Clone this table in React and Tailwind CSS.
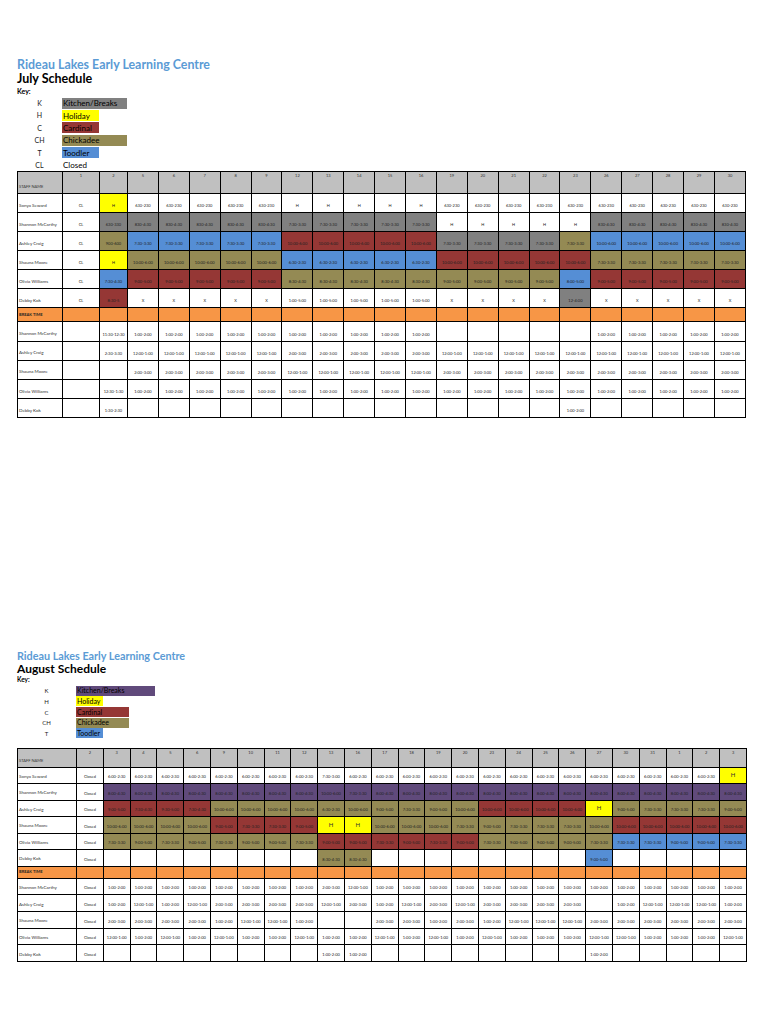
import React from 'react';

const fills = {
  '': 'bg-white',
  y: 'bg-[#ffff00]',
  g: 'bg-[#808080]',
  r: 'bg-[#953735]',
  o: 'bg-[#948a54]',
  b: 'bg-[#558ed5]',
  p: 'bg-[#604a7b]',
};

const rep = (n, c, t) => Array.from({ length: n }, () => [c, t]);
const txt = (n, t = '') => Array.from({ length: n }, () => t);

// July
const julyDays = ['1', '2', '5', '6', '7', '8', '9', '12', '13', '14', '15', '16', '19', '20', '21', '22', '23', '26', '27', '28', '29', '30'];

const julyRows = [
  ['Sonya Seward', [['', 'CL'], ['y', 'H'], ...rep(5, '', '630-230'), ...rep(5, '', 'H'), ...rep(10, '', '630-230')]],
  ['Shannon McCarthy', [['', 'CL'], ['g', '630-330'], ...rep(5, 'g', '830-4:30'), ...rep(5, 'g', '7:30-3:30'), ...rep(5, '', 'H'), ...rep(5, 'g', '830-4:30')]],
  ['Ashley Craig', [['', 'CL'], ['o', '900-600'], ...rep(5, 'b', '7:30-3:30'), ...rep(5, 'r', '10:00-6:00'), ...rep(4, 'g', '7:30-3:30'), ['o', '7:30-3:30'], ...rep(5, 'b', '10:00-6:00')]],
  ['Shauna Moore', [['', 'CL'], ['y', 'H'], ...rep(5, 'o', '10:00-6:00'), ...rep(5, 'b', '6:30-2:30'), ...rep(5, 'r', '10:00-6:00'), ...rep(5, 'o', '7:30-3:30')]],
  ['Olivia Williams', [['', 'CL'], ['b', '7:30-4:30'], ...rep(5, 'r', '9:00-5:00'), ...rep(5, 'o', '8:30-4:30'), ...rep(4, 'o', '9:00-5:00'), ['b', '8:00-5:00'], ...rep(5, 'r', '9:00-5:00')]],
  ['Debby Kok', [['', 'CL'], ['r', '8:30-5'], ...rep(5, '', 'X'), ...rep(5, '', '1:00-5:00'), ...rep(4, '', 'X'), ['g', '12-4:00'], ...rep(5, '', 'X')]],
];

const julyBreaks = [
  ['Shannon McCarthy', ['', '11:30-12:30', ...txt(10, '1:00-2:00'), ...txt(5), ...txt(5, '1:00-2:00')]],
  ['Ashley Craig', ['', '2:30-3:30', ...txt(5, '12:00-1:00'), ...txt(5, '2:00-3:00'), ...txt(10, '12:00-1:00')]],
  ['Shauna Moore', ['', '', ...txt(5, '2:00-3:00'), ...txt(5, '12:00-1:00'), ...txt(10, '2:00-3:00')]],
  ['Olivia Williams', ['', '12:30-1:30', ...txt(20, '1:00-2:00')]],
  ['Debby Kok', ['', '1:30-2:30', ...txt(14), '1:00-2:00', ...txt(5)]],
];

// August
const augDays = ['2', '3', '4', '5', '6', '9', '10', '11', '12', '13', '16', '17', '18', '19', '20', '23', '24', '25', '26', '27', '30', '31', '1', '2', '3'];

const augRows = [
  ['Sonya Seward', [['', 'Closed'], ...rep(8, '', '6:00-2:30'), ['', '7:30-3:00'], ...rep(14, '', '6:00-2:30'), ['y', 'H']]],
  ['Shannon McCarthy', [['', 'Closed'], ...rep(8, 'p', '8:00-4:30'), ['p', '10:00-6:00'], ['p', '7:30-3:30'], ...rep(14, 'p', '8:00-4:30')]],
  ['Ashley Craig', [['', 'Closed'], ['r', '9:00-5:00'], ['r', '7:30-4:30'], ['r', '9:30-5:00'], ['r', '7:30-4:30'], ...rep(4, 'o', '10:00-6:00'), ['o', '6:30-2:30'], ['o', '10:00-6:00'], ['o', '9:00-5:00'], ['o', '7:30-3:30'], ['o', '9:00-5:00'], ['o', '10:00-6:00'], ...rep(4, 'r', '10:00-6:00'), ['y', 'H'], ['o', '9:00-5:00'], ['o', '7:30-3:30'], ['o', '7:30-3:30'], ['o', '7:30-3:30'], ['o', '9:00-5:00']]],
  ['Shauna Moore', [['', 'Closed'], ...rep(4, 'o', '10:00-6:00'), ['r', '9:00-5:00'], ['r', '7:30-3:30'], ['r', '7:30-3:30'], ['r', '9:00-5:00'], ['y', 'H'], ['y', 'H'], ['o', '10:00-6:00'], ['o', '10:00-6:00'], ['o', '10:00-6:00'], ['o', '7:30-3:30'], ['o', '9:00-5:00'], ['o', '7:30-3:30'], ['o', '7:30-3:30'], ['o', '7:30-3:30'], ['o', '10:00-6:00'], ...rep(5, 'r', '10:00-6:00')]],
  ['Olivia Williams', [['', 'Closed'], ['o', '7:30-3:30'], ['o', '9:00-5:00'], ['o', '7:30-3:30'], ['o', '9:00-5:00'], ['o', '7:30-3:30'], ['o', '9:00-5:00'], ['o', '9:00-5:00'], ['o', '7:30-3:30'], ['r', '9:00-5:00'], ['r', '9:00-5:00'], ['r', '7:30-3:30'], ['r', '9:00-5:00'], ['r', '7:30-3:30'], ['r', '9:00-5:00'], ['o', '7:30-3:30'], ['o', '9:00-5:00'], ['o', '9:00-5:00'], ['o', '9:00-5:00'], ['o', '7:30-3:30'], ['b', '7:30-3:30'], ['b', '7:30-3:30'], ['b', '9:00-5:00'], ['b', '9:00-5:00'], ['b', '7:30-3:30']]],
  ['Debby Kok', [['', 'Closed'], ...rep(8, '', ''), ['o', '8:30-4:30'], ['o', '8:30-4:30'], ...rep(8, '', ''), ['b', '9:00-5:00'], ...rep(5, '', '')]],
];

const augBreaks = [
  ['Shannon McCarthy', ['Closed', ...txt(8, '1:00-2:00'), '2:00-3:00', '12:00-1:00', ...txt(14, '1:00-2:00')]],
  ['Ashley Craig', ['Closed', '1:00-2:00', '12:00-1:00', '1:00-2:00', '12:00-1:00', '2:00-3:00', '2:00-3:00', '2:00-3:00', '2:00-3:00', '12:00-1:00', '2:00-3:00', '1:00-2:00', '12:00-1:00', '2:00-3:00', '12:00-1:00', '2:00-3:00', '2:00-3:00', '2:00-3:00', '2:00-3:00', '', '1:00-2:00', '12:00-1:00', '12:00-1:00', '12:00-1:00', '1:00-2:00']],
  ['Shauna Moore', ['Closed', ...txt(4, '2:00-3:00'), '1:00-2:00', '12:00-1:00', '12:00-1:00', '1:00-2:00', '', '', '2:00-3:00', '2:00-3:00', '1:00-2:00', '2:00-3:00', '1:00-2:00', '12:00-1:00', '12:00-1:00', '12:00-1:00', '2:00-3:00', ...txt(5, '2:00-3:00')]],
  ['Olivia Williams', ['Closed', '12:00-1:00', '1:00-2:00', '12:00-1:00', '1:00-2:00', '12:00-1:00', '1:00-2:00', '1:00-2:00', '12:00-1:00', '1:00-2:00', '1:00-2:00', '12:00-1:00', '1:00-2:00', '12:00-1:00', '1:00-2:00', '12:00-1:00', '1:00-2:00', '1:00-2:00', '1:00-2:00', '12:00-1:00', '12:00-1:00', '1:00-2:00', '1:00-2:00', '1:00-2:00', '12:00-1:00']],
  ['Debby Kok', ['Closed', ...txt(8), '1:00-2:00', '1:00-2:00', ...txt(8), '1:00-2:00', ...txt(5)]],
];

const julyKey = [
  ['K', 'Kitchen/Breaks', 'w-[65px] bg-[#808080]'],
  ['H', 'Holiday', 'w-[37px] bg-[#ffff00]'],
  ['C', 'Cardinal', 'w-[37px] bg-[#953735]'],
  ['CH', 'Chickadee', 'w-[65px] bg-[#948a54]'],
  ['T', 'Toodler', 'w-[37px] bg-[#558ed5]'],
  ['CL', 'Closed', 'w-[37px]'],
];

const augKey = [
  ['K', 'Kitchen/Breaks', 'w-[79px] bg-[#604a7b]'],
  ['H', 'Holiday', 'w-[27px] bg-[#ffff00]'],
  ['C', 'Cardinal', 'w-[53px] bg-[#953735]'],
  ['CH', 'Chickadee', 'w-[53px] bg-[#948a54]'],
  ['T', 'Toodler', 'w-[27px] bg-[#558ed5]'],
];

const cell = 'border border-black p-0 text-center text-[4px] leading-none whitespace-nowrap overflow-hidden';
const nameCell = 'border border-black p-0 pl-px pb-[4px] align-bottom text-left text-[4.5px] leading-none whitespace-nowrap overflow-hidden bg-white text-[#333]';

function Key({ items, letterW, rowH, boxH, letterSize, labelSize }) {
  return (
    <div className="flex flex-col">
      {items.map(([k, label, box]) => (
        <div key={k} className={`flex items-center ${rowH}`}>
          <div className={`${letterW} text-center ${letterSize} text-[#222]`}>{k}</div>
          <div className={`${box} ${boxH} ${labelSize} leading-none flex items-center pl-px text-black`}>{label}</div>
        </div>
      ))}
    </div>
  );
}

function Schedule({ cols, tableW, days, rows, breaks, headH, rowH, breakH, brH, bigH }) {
  return (
    <table className={`table-fixed border-collapse ${tableW}`}>
      <colgroup>
        {cols.map((c, i) => (
          <col key={i} className={c} />
        ))}
      </colgroup>
      <tbody>
        <tr className={headH}>
          <td className="border border-black p-0 pl-px pb-[4px] align-bottom text-left text-[4px] leading-none uppercase bg-[#c0c0c0] text-[#333]">Staff Name</td>
          {days.map((d, i) => (
            <td key={i} className={`${cell} align-top pt-[2px] bg-[#c0c0c0] text-[#333]`}>{d}</td>
          ))}
        </tr>
        {rows.map(([name, cells]) => (
          <tr key={name} className={rowH}>
            <td className={nameCell}>{name}</td>
            {cells.map(([c, t], i) =>
              bigH && c === 'y' ? (
                <td key={i} className="border border-black p-0 text-center align-middle text-[6px] leading-none bg-[#ffff00] text-[#333]">{t}</td>
              ) : (
                <td key={i} className={`${cell} align-bottom pb-[4px] text-[#222] ${fills[c]}`}>{t}</td>
              )
            )}
          </tr>
        ))}
        <tr className={breakH}>
          <td className="border border-black p-0 pl-px align-middle text-left text-[4px] leading-none font-bold bg-[#f79646] text-[#222]">BREAK TIME</td>
          {days.map((d, i) => (
            <td key={i} className="border border-black p-0 bg-[#f79646]" />
          ))}
        </tr>
        {breaks.map(([name, cells]) => (
          <tr key={name} className={brH}>
            <td className={nameCell}>{name}</td>
            {cells.map((t, i) => (
              <td key={i} className={`${cell} align-bottom pb-[4px] bg-white text-[#222]`}>{t}</td>
            ))}
          </tr>
        ))}
      </tbody>
    </table>
  );
}

export default function App() {
  return (
    <div className="min-h-[1024px] w-[768px] bg-white pl-[17px] pt-[58px] font-['Lato','Open_Sans',sans-serif]">
      {/* July */}
      <section>
        <h1 className="text-[12.4px] leading-[14px] font-bold text-[#5b9bd5]">Rideau Lakes Early Learning Centre</h1>
        <h2 className="text-[12.5px] leading-[13px] font-bold text-black">July Schedule</h2>
        <p className="h-[11px] mt-px text-[7px] leading-[11px] font-bold text-black">Key:</p>
        <Key items={julyKey} letterW="w-[45px]" rowH="h-[12.4px]" boxH="h-[11px]" letterSize="text-[7px]" labelSize="text-[8px]" />
        <Schedule
          cols={['w-[45px]', 'w-[37px]', 'w-[28px]', ...txt(20)]}
          tableW="w-[729px]"
          days={julyDays}
          rows={julyRows}
          breaks={julyBreaks}
          headH="h-[22px]"
          rowH="h-[19px]"
          breakH="h-[14px]"
          brH="h-[19.2px]"
        />
      </section>

      {/* August */}
      <section className="mt-[232px]">
        <h1 className="text-[10.8px] leading-[12px] font-bold text-[#5b9bd5]">Rideau Lakes Early Learning Centre</h1>
        <h2 className="text-[12px] leading-[13px] font-bold text-black">August Schedule</h2>
        <p className="h-[10px] text-[6.5px] leading-[10px] font-bold text-black">Key:</p>
        <Key items={augKey} letterW="w-[59px]" rowH="h-[10.7px]" boxH="h-[10px]" letterSize="text-[6px]" labelSize="text-[7px]" />
        <div className="mt-[9px]">
          <Schedule
            cols={['w-[59px]', ...txt(25)]}
            tableW="w-[730px]"
            days={augDays}
            rows={augRows}
            breaks={augBreaks}
            headH="h-[19px]"
            rowH="h-[16.5px]"
            breakH="h-[12px]"
            brH="h-[16.7px]"
            bigH
          />
        </div>
      </section>
    </div>
  );
}
